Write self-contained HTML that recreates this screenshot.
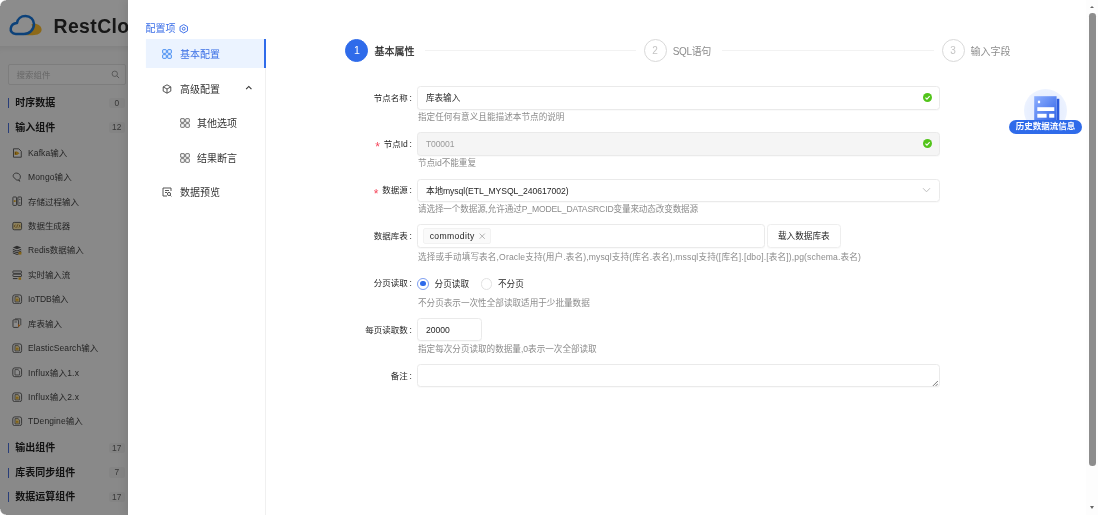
<!DOCTYPE html>
<html lang="zh-CN">
<head>
<meta charset="utf-8">
<title>RestCloud ETL</title>
<style>
*{box-sizing:border-box;margin:0;padding:0}
html,body{width:1098px;height:515px;overflow:hidden;background:#fff}
body{font-family:"Liberation Sans","Noto Sans CJK SC",sans-serif;color:#262626;position:relative;font-size:8.6px;line-height:1}
.abs{position:absolute}
/* ---------- underlying page ---------- */
#page{will-change:transform;position:absolute;left:0;top:0;width:1098px;height:515px;background:#fff}
#side{position:absolute;left:0;top:46px;width:140px;height:470px;background:#fafafa;box-shadow:inset 0 7px 7px -5px rgba(0,0,0,.07)}
.logo-text{position:absolute;left:53.5px;top:13.6px;font-size:19.4px;font-weight:700;color:#2a2a2a;letter-spacing:.4px;line-height:24px;white-space:nowrap}
.search{position:absolute;left:8.3px;top:64px;width:118px;height:21px;border:1px solid #e3e3e3;border-radius:2px;background:#fdfdfd}
.search span{position:absolute;left:7.2px;top:5.6px;font-size:8.5px;color:#bdbdbd}
.cat{position:absolute;left:8px;height:12px;width:125px}
.cat i{position:absolute;left:-.1px;top:1.6px;width:1.5px;height:10px;background:#4a70dc}
.cat b{position:absolute;left:7.2px;top:.7px;font-size:10px;line-height:12px;font-weight:700;color:#222;white-space:nowrap}
.cat em{position:absolute;left:100.9px;top:1px;width:15.7px;height:10.8px;background:#f0f0f0;border-radius:2px;font-style:normal;font-size:8.4px;line-height:11px;text-align:center;color:#666}
.it{position:absolute;left:12.4px;height:12px;white-space:nowrap}
.it svg{position:absolute;left:0;top:.8px;width:10.4px;height:10.4px}
.it span{position:absolute;left:15.7px;top:0;font-size:8.5px;line-height:12px;color:#434343}
#mask{position:absolute;left:0;top:0;width:1098px;height:515px;background:rgba(0,0,0,.45)}
/* ---------- drawer ---------- */
#drawer{will-change:transform;position:absolute;left:128px;top:0;width:970px;height:515px;background:#fff;box-shadow:-3px 0 8px rgba(0,0,0,.08)}
.cfg{position:absolute;left:17.5px;top:22.9px;font-size:10px;line-height:12px;color:#3a6ee8;white-space:nowrap}
.menu-line{position:absolute;left:137px;top:39px;width:1px;height:476px;background:#f0f0f0}
.mi{position:absolute;left:17px;width:120px;height:28.6px;color:#333;font-size:10px;line-height:31.9px;white-space:nowrap}
.mi.sel{background:#ebf3ff;color:#3a6fe6;border-right:2px solid #2f6bea;width:120.6px;box-shadow:inset .9px 0 0 #fff}
.mi svg{position:absolute;top:10.1px;width:10px;height:10px}
.mi span{position:absolute}
/* steps */
.st-ic{position:absolute;top:38.8px;width:23px;height:23px;border-radius:50%;border:1px solid #d9d9d9;color:#c4c4c4;font-size:10px;line-height:21.6px;text-align:center;background:#fff}
.st-ic.on{background:#2f6bea;border-color:#2f6bea;color:#fff;font-size:10.6px}
.st-t{position:absolute;top:44.7px;font-size:10px;line-height:14px;color:#8c8c8c;white-space:nowrap}
.st-t.on{color:#262626;-webkit-text-stroke:.25px #262626}
.st-l{position:absolute;top:50.3px;height:1px;background:#f2f2f2}
/* form */
.lb{position:absolute;right:686.2px;font-size:8.5px;line-height:12px;color:#262626;white-space:nowrap;text-align:right}
.lb i{color:#f5455a;font-style:normal;margin-right:2.6px;font-family:"Liberation Mono","Liberation Sans",monospace;font-size:12px;line-height:12px;position:relative;top:4.6px}
.lb u{text-decoration:none;margin-left:1.6px}
.in{position:absolute;left:289.4px;width:522.4px;height:23.2px;border:1px solid #eaeaea;border-radius:3.5px;box-shadow:0 1px 1px rgba(0,0,0,.025);background:#fff;font-size:8.6px;line-height:22.6px;padding-left:7.5px;color:#262626;white-space:nowrap}
.in.dis{background:#f5f5f5;color:#9a9a9a}
.hp{position:absolute;left:290px;font-size:8.6px;line-height:12px;color:#8c8c8c;white-space:nowrap}
.ok{position:absolute;right:7px;top:6px;width:9px;height:9px}

.tag{position:absolute;left:4.7px;top:2.2px;height:16.9px;width:67.8px;background:#fafafa;border:1px solid #f2f2f2;border-radius:2px;font-size:8.6px;line-height:14.9px;padding-left:5.6px;color:#262626;letter-spacing:.38px}
.tag svg{position:absolute;left:55.3px;top:4.6px;width:6.4px;height:6.4px}
.btn{position:absolute;width:73.6px;height:23.2px;border:1px solid #eeeeee;border-radius:3.5px;box-shadow:0 1px 1px rgba(0,0,0,.025);background:#fff;font-size:8.6px;line-height:23.4px;text-align:center;color:#262626;white-space:nowrap}
.radio{position:absolute;width:11.9px;height:11.9px;border-radius:50%;border:1px solid #e2e2e2;background:#fff}
.radio.on{border-color:#7c9df0}
.radio.on:after{content:"";position:absolute;left:2.3px;top:2.3px;width:5.3px;height:5.3px;border-radius:50%;background:#2f6bea}
.rt{position:absolute;font-size:8.6px;line-height:12px;color:#262626;white-space:nowrap}
.hist{position:absolute;left:881px;top:84px;width:74px;height:52px}
.hist-c{position:absolute;left:15.2px;top:4.8px;width:42.8px;height:42.8px;border-radius:50%;background:radial-gradient(circle at 50% 55%,#e3ecff 0,#e9f0ff 55%,#f3f7ff 100%)}
.hist-l{position:absolute;left:.4px;top:36px;width:72.2px;height:13.8px;border-radius:7px;background:#2f6bea;color:#fff;font-size:8.5px;line-height:13.8px;text-align:center;font-weight:700;white-space:nowrap}
.sb{position:absolute;left:958px;top:0;width:12px;height:515px;background:#fdfdfd}
.sb i{position:absolute;left:3.3px;top:13.4px;width:6.6px;height:452.4px;border-radius:3.3px;background:#8d8d8d}
.sb b{position:absolute;left:4px;width:0;height:0;border-left:2.6px solid transparent;border-right:2.6px solid transparent}
.sb .up{top:6px;border-bottom:2.8px solid #666}
.sb .dn{top:506.2px;border-top:3.1px solid #666}
.cn{position:absolute;left:0;width:6px;height:6px;z-index:9}
.cn.tl{top:0;background:radial-gradient(circle at 100% 100%,rgba(255,255,255,0) 5px,#fff 6.2px)}
.cn.bl{top:509px;background:radial-gradient(circle at 100% 0,rgba(255,255,255,0) 5px,#fff 6.2px)}
</style>
</head>
<body>
<div id="page">
  <svg class="abs" style="left:8px;top:13px;width:36px;height:24px" viewBox="8 13 36 24">
    <path d="M31.5 24.2C36.5 22.6 41.6 25.4 41.6 29.6 41.6 33.7 37.5 35.2 32.5 35.2L25 35.2C30.5 33.5 33.8 29.5 31.5 24.2Z" fill="#ffc02e"/>
    <path d="M15.8 34C11.8 34 10.3 30.8 10.8 28.2 11.3 25.3 13.6 23.3 17 23 17.6 18.8 21 16 25.5 16 30.4 16 34 19.6 34 24 34 29.8 29.5 34 24 34Z" fill="none" stroke="#1677dd" stroke-width="2.5" stroke-linejoin="round"/>
  </svg>
  <div class="logo-text">RestCloud</div>
  <div id="side"></div>
  <div class="search"><span>搜索组件</span>
    <svg class="abs" style="left:102px;top:5px;width:9px;height:9px" viewBox="0 0 10 10"><circle cx="4.2" cy="4.2" r="3" fill="none" stroke="#9a9a9a" stroke-width="1"/><path d="M6.5 6.5L9 9" stroke="#9a9a9a" stroke-width="1.1"/></svg>
  </div>
  <div id="cats">
    <div class="cat" style="top:96.7px"><i></i><b>时序数据</b><em>0</em></div>
    <div class="cat" style="top:121.2px"><i></i><b>输入组件</b><em>12</em></div>
    <div class="cat" style="top:441.7px"><i></i><b>输出组件</b><em>17</em></div>
    <div class="cat" style="top:466.1px"><i></i><b>库表同步组件</b><em>7</em></div>
    <div class="cat" style="top:490.5px"><i></i><b>数据运算组件</b><em>17</em></div>
    <div class="it" style="top:146.8px"><svg viewBox="0 0 10.4 10.4"><path d="M1.5 .8H6.8L9.3 3.3V9.2H1.5Z" fill="#fff" stroke="#555" stroke-width=".9" stroke-linejoin="round"/><path d="M2.6 3.4H5L7.6 5.2 5 7H2.6Z" fill="#f0b429"/><path d="M3.4 4.2V6.3" stroke="#8a5a00" stroke-width=".7"/></svg><span style="letter-spacing:0.093px">Kafka输入</span></div>
    <div class="it" style="top:171.2px"><svg viewBox="0 0 10.4 10.4"><path d="M1.2 3.6C1.4 1.9 3 .9 4.8 1.1 7 1.3 8.6 3 8.4 5.2 8.3 6.3 7.7 7.2 6.9 7.7L7.8 9.3 6.2 8.1C4.6 8.3 3.4 7.6 2.9 6.3 2 6 1.1 5 1.2 3.6Z" fill="none" stroke="#555" stroke-width=".9" stroke-linejoin="round"/></svg><span style="letter-spacing:0.1px">Mongo输入</span></div>
    <div class="it" style="top:195.6px"><svg viewBox="0 0 10.4 10.4"><rect x=".9" y="1" width="3.6" height="8.4" rx=".6" fill="#fff" stroke="#555" stroke-width=".9"/><rect x="5.9" y="1" width="3.6" height="8.4" rx=".6" fill="#fff" stroke="#555" stroke-width=".9"/><rect x="1.8" y="4.2" width="1.8" height="1.8" fill="#f0b429"/><path d="M7 3.4H8.4M7 7H8.4" stroke="#555" stroke-width=".7"/></svg><span style="letter-spacing:-0.019px">存储过程输入</span></div>
    <div class="it" style="top:220.0px"><svg viewBox="0 0 10.4 10.4"><rect x=".8" y="1.4" width="8.8" height="7.4" rx="1.4" fill="#ffe9a8" stroke="#555" stroke-width=".9"/><path d="M3.4 3.7L2.3 5.1 3.4 6.5M6.9 3.7L8 5.1 6.9 6.5M5.6 3.5L4.7 6.7" fill="none" stroke="#8a5a00" stroke-width=".7"/></svg><span style="letter-spacing:-0.083px">数据生成器</span></div>
    <div class="it" style="top:244.4px"><svg viewBox="0 0 10.4 10.4"><path d="M5 .8L9.2 2.5 5 4.2 .8 2.5Z" fill="#555"/><path d="M.8 4.3L5 6 9.2 4.3M.8 6.1L5 7.8 9.2 6.1M.8 7.8L5 9.5 9.2 7.8" fill="none" stroke="#555" stroke-width="1"/><rect x="6.6" y="6.8" width="2.8" height="2.8" fill="#f0b429"/></svg><span style="letter-spacing:-0.004px">Redis数据输入</span></div>
    <div class="it" style="top:268.9px"><svg viewBox="0 0 10.4 10.4"><rect x=".9" y="1" width="8.6" height="2.3" rx=".5" fill="#fff" stroke="#555" stroke-width=".9"/><rect x=".9" y="4.2" width="8.6" height="2.3" rx=".5" fill="#fff" stroke="#555" stroke-width=".9"/><path d="M.9 8.6H5.5" stroke="#555" stroke-width="1"/><rect x="6.5" y="7.4" width="2.6" height="2.4" fill="#f0b429"/></svg><span style="letter-spacing:-0.083px">实时输入流</span></div>
    <div class="it" style="top:293.3px"><svg viewBox="0 0 10.4 10.4"><rect x=".8" y=".9" width="8.8" height="8.8" rx="2" fill="#fff" stroke="#555" stroke-width=".9"/><path d="M3 2.6H6L7.6 4.1V8H3Z" fill="#ffe9a8" stroke="#555" stroke-width=".7" stroke-linejoin="round"/><rect x="4" y="4.8" width="2.4" height="2" fill="#f0b429"/></svg><span style="letter-spacing:-0.099px">IoTDB输入</span></div>
    <div class="it" style="top:317.7px"><svg viewBox="0 0 10.4 10.4"><path d="M3 .9H8.8V7.2" fill="none" stroke="#555" stroke-width=".8"/><rect x="1" y="1.8" width="5.6" height="7.6" rx=".8" fill="#fff" stroke="#555" stroke-width=".9"/><path d="M6 6L8.6 7.5 6 9Z" fill="#f08a24"/><path d="M2.4 4H5" stroke="#555" stroke-width=".7"/></svg><span style="letter-spacing:-0.004px">库表输入</span></div>
    <div class="it" style="top:342.1px"><svg viewBox="0 0 10.4 10.4"><rect x=".8" y=".9" width="8.8" height="8.8" rx="2" fill="#fff" stroke="#555" stroke-width=".9"/><path d="M3 2.6H6L7.6 4.1V8H3Z" fill="#ffe9a8" stroke="#555" stroke-width=".7" stroke-linejoin="round"/><rect x="4" y="4.8" width="2.4" height="2" fill="#f0b429"/></svg><span style="letter-spacing:0.089px">ElasticSearch输入</span></div>
    <div class="it" style="top:366.5px"><svg viewBox="0 0 10.4 10.4"><rect x=".8" y=".9" width="8.8" height="8.8" rx="2" fill="#fff" stroke="#555" stroke-width=".9"/><path d="M3 2.6H6L7.6 4.1V8H3Z" fill="#fff" stroke="#555" stroke-width=".7" stroke-linejoin="round"/></svg><span style="letter-spacing:0.222px">Influx输入1.x</span></div>
    <div class="it" style="top:390.9px"><svg viewBox="0 0 10.4 10.4"><rect x=".8" y=".9" width="8.8" height="8.8" rx="2" fill="#fff" stroke="#555" stroke-width=".9"/><path d="M3 2.6H6L7.6 4.1V8H3Z" fill="#ffe9a8" stroke="#555" stroke-width=".7" stroke-linejoin="round"/><rect x="4" y="4.8" width="2.4" height="2" fill="#f0b429"/></svg><span style="letter-spacing:0.222px">Influx输入2.x</span></div>
    <div class="it" style="top:415.3px"><svg viewBox="0 0 10.4 10.4"><rect x=".8" y=".9" width="8.8" height="8.8" rx="2" fill="#fff" stroke="#555" stroke-width=".9"/><path d="M3 2.6H6L7.6 4.1V8H3Z" fill="#ffe9a8" stroke="#555" stroke-width=".7" stroke-linejoin="round"/><rect x="4" y="4.8" width="2.4" height="2" fill="#f0b429"/></svg><span style="letter-spacing:0.104px">TDengine输入</span></div>
  </div>
</div>
<div id="mask"></div>
<div class="cn tl"></div><div class="cn bl"></div>
<div id="drawer">
  <div class="cfg">配置项
    <svg class="abs" style="left:33.3px;top:1.3px;width:9.5px;height:9.5px" viewBox="0 0 10 10"><path d="M5 .6L8.9 2.8V7.2L5 9.4 1.1 7.2V2.8Z" fill="none" stroke="#3a6ee8" stroke-width="1" stroke-linejoin="round"/><circle cx="5" cy="5" r="1.5" fill="none" stroke="#3a6ee8" stroke-width="1"/></svg>
  </div>
  <div class="menu-line"></div>
  <div class="mi sel" style="top:39px">
    <svg style="left:17px" viewBox="0 0 10 10"><g fill="none" stroke="#3d88f2" stroke-width="1"><rect x=".7" y=".7" width="3.6" height="3.6" rx=".5"/><rect x="5.7" y=".7" width="3.6" height="3.6" rx=".5"/><rect x=".7" y="5.7" width="3.6" height="3.6" rx=".5"/><rect x="5.7" y="5.7" width="3.6" height="3.6" rx=".5"/></g></svg>
    <span style="left:35px">基本配置</span>
  </div>
  <div class="mi" style="top:73.5px">
    <svg style="left:17px" viewBox="0 0 10 10"><g fill="none" stroke="#444" stroke-width=".9" stroke-linejoin="round"><path d="M5 .8L8.8 2.9V7.1L5 9.2 1.2 7.1V2.9Z"/><path d="M1.2 2.9L5 5 8.8 2.9M5 5V9.2"/></g></svg>
    <span style="left:35px">高级配置</span>
    <svg style="left:99.8px;top:10.8px;width:7.6px;height:7.6px" viewBox="0 0 8 8"><path d="M1.2 5.4L4 2.6 6.8 5.4" fill="none" stroke="#333" stroke-width="1.2"/></svg>
  </div>
  <div class="mi" style="top:108px">
    <svg style="left:34.5px" viewBox="0 0 10 10"><g fill="none" stroke="#5c5c5c" stroke-width=".9"><rect x=".7" y=".7" width="3.6" height="3.6" rx=".3"/><rect x="5.7" y=".7" width="3.6" height="3.6" rx=".5"/><rect x=".7" y="5.7" width="3.6" height="3.6" rx=".5"/><rect x="5.7" y="5.7" width="3.6" height="3.6" rx=".5"/></g></svg>
    <span style="left:52px">其他选项</span>
  </div>
  <div class="mi" style="top:142.5px">
    <svg style="left:34.5px" viewBox="0 0 10 10"><g fill="none" stroke="#5c5c5c" stroke-width=".9"><rect x=".7" y=".7" width="3.6" height="3.6" rx=".3"/><rect x="5.7" y=".7" width="3.6" height="3.6" rx=".5"/><rect x=".7" y="5.7" width="3.6" height="3.6" rx=".5"/><rect x="5.7" y="5.7" width="3.6" height="3.6" rx=".5"/></g></svg>
    <span style="left:52px">结果断言</span>
  </div>
  <div class="mi" style="top:177px">
    <svg style="left:17px" viewBox="0 0 10 10"><g fill="none" stroke="#444" stroke-width=".9"><path d="M9 4V1H1V9H5"/><path d="M3 3.5H7M3 5.5H5"/><circle cx="7" cy="7" r="1.6"/><path d="M8.2 8.2L9.4 9.4"/></g></svg>
    <span style="left:35px">数据预览</span>
  </div>

  <!-- steps -->
  <div class="st-ic on" style="left:217.4px">1</div>
  <div class="st-t on" style="left:246.5px">基本属性</div>
  <div class="st-l" style="left:297px;width:211px"></div>
  <div class="st-ic" style="left:515.5px">2</div>
  <div class="st-t" style="letter-spacing:-0.343px;left:544.7px">SQL语句</div>
  <div class="st-l" style="left:594px;width:212px"></div>
  <div class="st-ic" style="left:813.5px">3</div>
  <div class="st-t" style="left:842.5px">输入字段</div>

  <!-- form -->
  <div class="lb" style="top:91.8px">节点名称<u>:</u></div>
  <div class="in" style="top:86.4px"><span style="letter-spacing:0.002px">库表输入</span><svg class="ok" viewBox="0 0 10 10"><circle cx="5" cy="5" r="5" fill="#52c41a"/><path d="M2.7 5.1L4.4 6.8 7.4 3.5" fill="none" stroke="#fff" stroke-width="1.2"/></svg></div>
  <div class="hp" style="letter-spacing:0.023px;top:111.1px">指定任何有意义且能描述本节点的说明</div>

  <div class="lb" style="top:137.9px"><i>*</i>节点Id<u>:</u></div>
  <div class="in dis" style="top:132.4px"><span style="letter-spacing:-0.109px">T00001</span><svg class="ok" viewBox="0 0 10 10"><circle cx="5" cy="5" r="5" fill="#52c41a"/><path d="M2.7 5.1L4.4 6.8 7.4 3.5" fill="none" stroke="#fff" stroke-width="1.2"/></svg></div>
  <div class="hp" style="letter-spacing:-0.033px;top:157.1px">节点id不能重复</div>

  <div class="lb" style="top:184px"><i>*</i>数据源<u>:</u></div>
  <div class="in" style="top:178.5px"><span style="letter-spacing:-0.042px">本地mysql(ETL_MYSQL_240617002)</span><svg class="abs" style="right:8px;top:6.1px;width:9px;height:8px" viewBox="0 0 9 8"><path d="M1 2.2L4.5 5.8 8 2.2" fill="none" stroke="#bfbfbf" stroke-width="1"/></svg></div>
  <div class="hp" style="letter-spacing:-0.142px;top:203.1px">请选择一个数据源,允许通过P_MODEL_DATASRCID变量来动态改变数据源</div>

  <div class="lb" style="top:229.9px">数据库表<u>:</u></div>
  <div class="in" style="top:224.4px;width:348px;padding-left:3px">
    <div class="tag">commodity<svg viewBox="0 0 8 8"><path d="M.8 .8L7.2 7.2M7.2 .8L.8 7.2" stroke="#8c8c8c" stroke-width=".8"/></svg></div>
  </div>
  <div class="btn" style="left:639px;top:224.4px">载入数据库表</div>
  <div class="hp" style="letter-spacing:0.138px;top:250.8px">选择或手动填写表名,Oracle支持(用户.表名),mysql支持(库名.表名),mssql支持([库名].[dbo].[表名]),pg(schema.表名)</div>

  <div class="lb" style="top:277.4px">分页读取<u>:</u></div>
  <div class="radio on" style="left:289.1px;top:277.8px"></div>
  <div class="rt" style="left:306.6px;top:277.9px">分页读取</div>
  <div class="radio" style="left:352.6px;top:277.8px"></div>
  <div class="rt" style="left:370px;top:277.9px">不分页</div>
  <div class="hp" style="letter-spacing:-0.005px;top:296.9px">不分页表示一次性全部读取适用于少批量数据</div>

  <div class="lb" style="top:323.9px">每页读取数<u>:</u></div>
  <div class="in" style="top:318px;width:65px"><span style="letter-spacing:-0.001px">20000</span></div>
  <div class="hp" style="letter-spacing:-0.016px;top:342.6px">指定每次分页读取的数据量,0表示一次全部读取</div>

  <div class="lb" style="top:370px">备注<u>:</u></div>
  <div class="in" style="top:364.2px"><svg class="abs" style="right:.6px;bottom:.2px;width:6.4px;height:6.4px" viewBox="0 0 7 7"><path d="M6.5 1L1 6.5M6.5 4L4 6.5" stroke="#555" stroke-width=".9"/></svg></div>

  <!-- floating history button -->
  <div class="hist">
    <div class="hist-c"></div>
    <svg class="abs" style="left:24px;top:11px;width:28px;height:26px" viewBox="0 0 28 26"><defs><linearGradient id="hg" x1="0" y1="0" x2="1" y2="1"><stop offset="0" stop-color="#8fb0ff"/><stop offset="1" stop-color="#2f62e6"/></linearGradient></defs><rect x="23.6" y="3.8" width="2.7" height="23" fill="#2b5bdc"/><rect x="1.2" y="1.2" width="22.4" height="25" fill="url(#hg)"/><rect x="4.9" y="5.7" width="2.2" height="2.5" fill="#fff"/><rect x="4.3" y="12.2" width="17" height="3.8" fill="#fff"/><rect x="4.3" y="18.8" width="9.3" height="3.9" fill="#fff"/><rect x="16.2" y="18.8" width="5.1" height="3.9" fill="#fff"/></svg>
    <div class="hist-l">历史数据流信息</div>
  </div>

  <!-- scrollbar -->
  <div class="sb"><b class="up"></b><i></i><b class="dn"></b></div>
</div>
</body>
</html>
